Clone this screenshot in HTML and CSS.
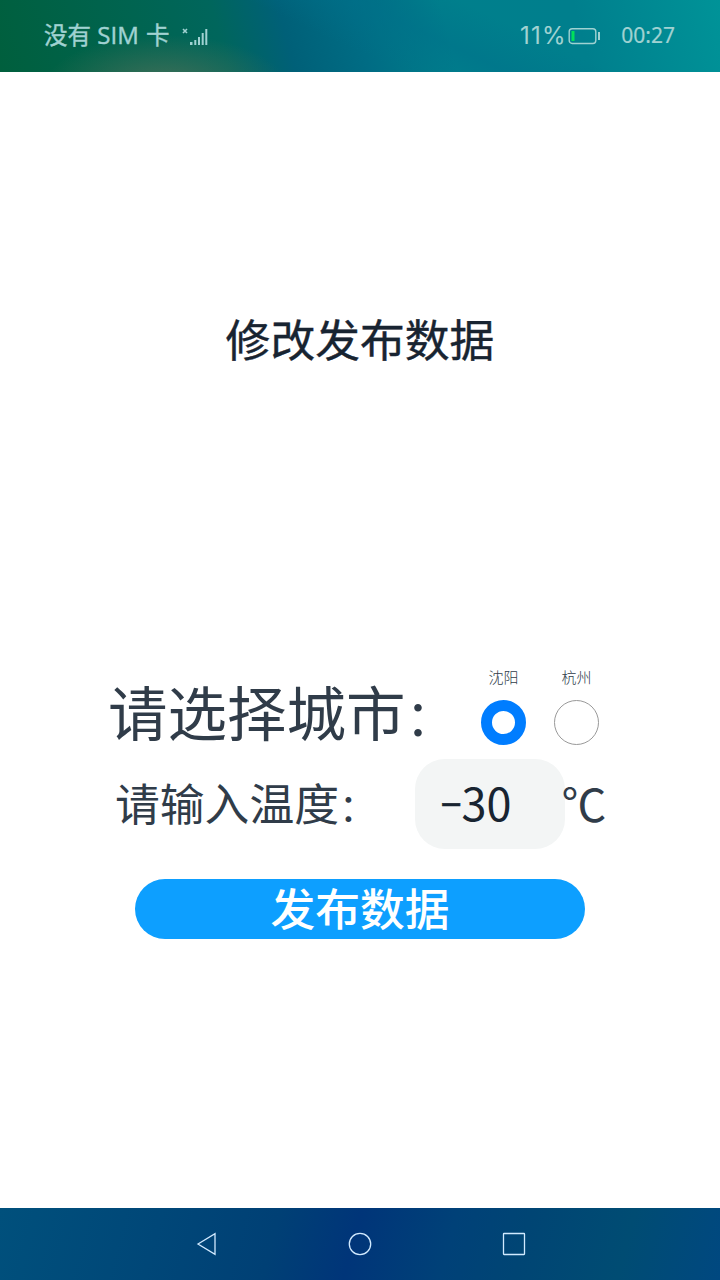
FILE: index.html
```html
<!DOCTYPE html>
<html lang="zh-CN">
<head>
<meta charset="utf-8">
<title>修改发布数据</title>
<link rel="stylesheet" href="styles.css">
</head>
<body>
<div class="screen">
  <header class="status">
    <span class="carrier">没有 <span class="sim">SIM</span> 卡</span>
    <svg class="signal" width="27" height="20" viewBox="0 0 27 20"><path d="M1 1l4 4M5 1l-4 4" stroke="currentColor" stroke-width="1.600"/><path d="M8 14h2.500v3h-2.500zM12.300 12h2v5h-2zM16 9h2v8h-2zM19.700 5h2v12h-2zM23.300 1h2v16h-2z" fill="currentColor"/></svg>
    <span class="percent">11%</span>
    <svg class="battery" width="33" height="18" viewBox="0 0 33 18"><rect x="1.200" y="1.700" width="26.600" height="14.800" rx="3" fill="none" stroke="currentColor" stroke-width="1.4"/><rect x="3.500" y="4" width="3" height="10" fill="#00e05a"/><path d="M31 5v8" stroke="currentColor" stroke-width="2"/></svg>
    <span class="clock">00:27</span>
  </header>
  <main class="page">
    <h1 class="title">修改发布数据</h1>
    <section class="city">
      <span class="city-label">请选择城市<span class="colon">：</span></span>
      <div class="options">
        <label class="option"><span>沈阳</span><i class="radio checked"></i></label>
        <label class="option"><span>杭州</span><i class="radio"></i></label>
      </div>
    </section>
    <section class="temperature">
      <span class="temp-label">请输入温度<span class="colon">：</span></span>
      <div class="field"><span class="minus">–</span>30</div>
      <span class="unit">℃</span>
    </section>
    <button class="publish">发布数据</button>
  </main>
  <nav class="nav">
    <svg width="24" height="24" viewBox="0 0 24 24"><path d="M3 12L20 1.700V22.300Z"/></svg>
    <svg width="24" height="24" viewBox="0 0 24 24"><circle cx="12" cy="12" r="10.700"/></svg>
    <svg width="24" height="24" viewBox="0 0 24 24"><rect x="1.500" y="1.500" width="21" height="21" rx=".5"/></svg>
  </nav>
</div>
</body>
</html>
```
FILE: styles.css
```css
* { box-sizing: border-box; }
body { margin: 0; font-family: "Noto Sans CJK SC", sans-serif; color: #303c49; background: #fff; }
.screen { width: 720px; height: 1280px; display: flex; flex-direction: column; overflow: hidden; }
.status {
  height: 72px; flex: none; display: flex; align-items: center; padding: 0 45px 2px 44px;
  color: #a0d2d2; line-height: 1; white-space: nowrap;
  background:
    radial-gradient(ellipse 120px 50px at 165px 85px, rgba(75,112,88,.85), transparent),
    linear-gradient(205deg, transparent 30%, rgba(0,112,138,.5) 42%, transparent 54%),
    linear-gradient(75deg, #005f3d 0, #006450 20%, #00665c 31%, #006078 40%, #006c84 50%, #007f8c 62%, #007f8d 80%, #009398 100%);
}
.carrier { font-size: 23.500px; width: 138px; -webkit-text-stroke: .4px; }
.sim { font-family: "Open Sans", sans-serif; font-size: 24px; margin: 0 2px 0 1px; }
.signal { margin-top: 5px; }
.percent { margin-left: 311px; width: 48px; font-family: Inter, sans-serif; font-size: 24px; letter-spacing: 1.200px; padding-top: 1px; }
.battery { flex: none; margin-top: 2px; }
.clock { margin-left: auto; font-family: "Noto Sans", sans-serif; font-size: 21px; padding-top: 1px; -webkit-text-stroke: .2px; }
.page { height: 1136px; flex: none; display: flex; flex-direction: column; align-items: center; }
.title { margin: 239px 0 0; font-size: 44.800px; line-height: 54px; font-weight: 400; -webkit-text-stroke: .4px; color: #182431; }
.city { width: 504px; height: 92px; margin-top: 302px; display: flex; justify-content: space-between; }
.city-label { font-size: 59.500px; line-height: 86px; white-space: nowrap; }
.colon { font-size: .84em; }
.options { display: flex; gap: 28px; margin-right: 13px; }
.option { width: 45px; display: flex; flex-direction: column; align-items: center; font-size: 15px; font-weight: 300; line-height: 20px; }
.radio { width: 45px; height: 45px; margin-top: 13px; border-radius: 50%; border: 1.5px solid #999; }
.radio.checked { border: 11px solid #007dff; }
.temperature { width: 490px; height: 90px; display: flex; align-items: center; }
.temp-label { width: 299.500px; flex: none; font-size: 44.800px; line-height: 60px; white-space: nowrap; padding-bottom: 1px; }
.field { width: 150px; height: 90px; flex: none; border-radius: 30px; background: #f3f5f5; padding-left: 25px; font-size: 45px; line-height: 86px; color: #182431; display: flex; }
.minus { width: 22px; flex: none; font-family: Roboto, sans-serif; font-size: 36px; line-height: 95px; -webkit-text-stroke: .6px; }
.unit { font-size: 45px; line-height: 60px; padding-bottom: 3px; margin-left: -3px; }
.publish { width: 450px; height: 60px; margin-top: 30px; padding: 0 0 4px; border: 0; border-radius: 30px; background: #0d9fff; color: #fff; font: 500 44.800px/56px "Noto Sans CJK SC", sans-serif; }
.nav {
  height: 72px; flex: none; display: flex; align-items: center; justify-content: center; gap: 129.500px;
  background: linear-gradient(105deg, #00507c 0, #004778 22%, #004075 38%, #003579 49%, #004178 62%, #004574 72%, #004c73 86%, #004880 100%);
}
.nav svg { fill: none; stroke: #d1eaff; stroke-width: 1.3; }
```
